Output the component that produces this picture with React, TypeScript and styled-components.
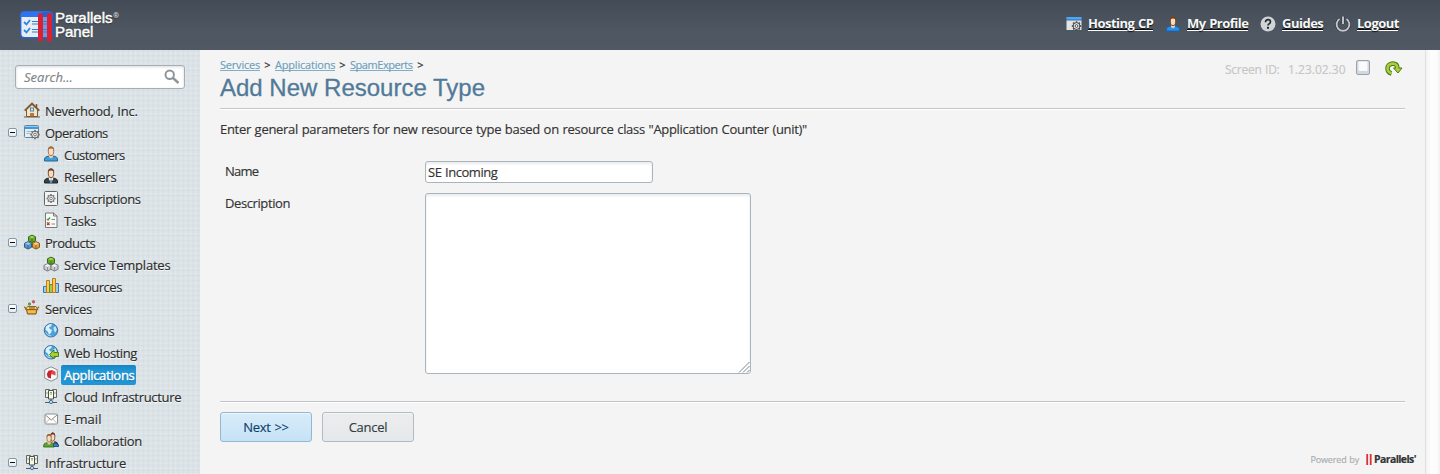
import React from 'react';
import styled, { createGlobalStyle } from 'styled-components';

const Global = createGlobalStyle`
  * { box-sizing: border-box; }
  body {
    margin: 0;
    font-family: 'Trebuchet MS', 'Open Sans', 'Noto Sans', sans-serif;
    font-size: 13px;
    word-spacing: 0.6px;
    color: #333;
    -webkit-text-stroke: 0.15px;
    background: #f4f4f4;
    overflow: hidden;
  }
`;

const Page = styled.div`
  display: flex;
  flex-direction: column;
  width: 1440px;
  height: 474px;
  overflow: hidden;
`;

const Header = styled.header`
  display: flex;
  justify-content: space-between;
  height: 50px;
  flex: none;
  padding: 10px 42px 0 20px;
  background: linear-gradient(#434c56, #4e5761 60%, #505963);
`;

const Brand = styled.div`
  display: flex;
  gap: 1px;
`;

const BrandName = styled.div`
  font: 15px/14px 'Liberation Sans', sans-serif;
  color: #fff;
  text-shadow: 0 1px 1px #222;
  -webkit-text-stroke: 0.45px #fff;
  padding-top: 1px;
  sup {
    margin-left: 1px;
    font-size: 7px;
    line-height: 0;
    vertical-align: 5px;
    color: #c0c5c9;
    -webkit-text-stroke: 0.2px #c0c5c9;
  }
`;

const Nav = styled.nav`
  display: flex;
  height: 27px;
  align-items: center;
`;

const NavItem = styled.div<{ $gap: number }>`
  display: flex;
  align-items: center;
  gap: 6px;
  margin-left: ${p => p.$gap}px;
`;

const NavLink = styled.a<{ $w: number; $ls: number }>`
  width: ${p => p.$w}px;
  height: 15px;
  line-height: 14px;
  white-space: nowrap;
  font-weight: 700;
  -webkit-text-stroke: 0;
  letter-spacing: ${p => p.$ls}px;
  color: #f6f7f8;
  text-shadow: 0 1px 1px #111;
  border-bottom: 1px solid #fff;
  box-shadow: 0 -1px 0 #111 inset;
`;

const Body = styled.div`
  display: flex;
  flex: 1;
  min-height: 0;
`;

const Sidebar = styled.aside`
  width: 200px;
  flex: none;
  padding: 15px 0 0;
  overflow: hidden;
  background:
    repeating-linear-gradient(90deg, rgba(255, 255, 255, 0.1) 0 1px, transparent 1px 3px, rgba(150, 170, 180, 0.06) 3px 4px, transparent 4px 5px),
    repeating-linear-gradient(0deg, rgba(255, 255, 255, 0.1) 0 1px, transparent 1px 3px, rgba(150, 170, 180, 0.06) 3px 4px, transparent 4px 5px),
    #dce3e7;
`;

const SearchBox = styled.div`
  display: flex;
  align-items: center;
  justify-content: space-between;
  width: 170px;
  height: 24px;
  margin: 0 0 11px 15px;
  padding: 0 4px 0 8px;
  border: 1px solid #a2aeb8;
  border-radius: 3px;
  background: #fff;
  box-shadow: inset 0 1px 3px rgba(0, 0, 0, 0.15);
  font-style: italic;
  color: #808488;
`;

const Row = styled.div<{ $child?: boolean }>`
  display: flex;
  align-items: center;
  height: 22px;
  padding-left: ${p => (p.$child ? 43 : 8)}px;
`;

const Toggle = styled.span<{ $hidden?: boolean }>`
  display: flex;
  align-items: center;
  justify-content: center;
  width: 9px;
  height: 9px;
  margin: 0 7px 2px 0;
  border: 1px solid #7d99ad;
  border-radius: 2px;
  background: linear-gradient(#fff, #e6eaec);
  visibility: ${p => (p.$hidden ? 'hidden' : 'visible')};
  &::after {
    content: '';
    width: 5px;
    height: 1px;
    background: #111;
  }
`;

const IconSlot = styled.span`
  display: flex;
  width: 16px;
  height: 16px;
  margin-bottom: 2px;
`;

const Label = styled.span<{ $ls: number; $active?: boolean }>`
  height: 20px;
  line-height: 20px;
  margin-left: 2px;
  padding: 0 2px 0 3px;
  white-space: nowrap;
  letter-spacing: ${p => p.$ls}px;
  border-radius: 2px;
  color: ${p => (p.$active ? '#fff' : '#2c2c2c')};
  background: ${p => (p.$active ? 'linear-gradient(#1784c4, #1f96d6 30%)' : 'none')};
  -webkit-text-stroke: ${p => (p.$active ? '0.4px #fff' : '0.15px')};
  text-shadow: ${p => (p.$active ? '0 1px 1px #0d5c8c' : '0 1px 0 #f4f7f8')};
`;

const Content = styled.main`
  display: flex;
  flex-direction: column;
  width: 1225px;
  padding: 8px 20px 0;
  background: #f4f4f4;
`;

const Gutter = styled.div`
  width: 15px;
  border-left: 1px solid #e0e0e0;
  background: linear-gradient(90deg, #f3f3f3, #fdfdfd 5px, #fbfbfb 12px, #ececec 13px, #fafafa);
`;

const TopLine = styled.div`
  display: flex;
  justify-content: space-between;
  height: 51px;
  border-bottom: 1px solid #c6c6c6;
  box-shadow: 0 1px 0 #fff;
`;

const Crumbs = styled.div`
  display: flex;
  height: 14px;
  font-size: 11px;
  line-height: 13px;
  span {
    width: 15px;
    text-align: center;
    color: #333;
  }
`;

const Crumb = styled.a<{ $w: number; $ls: number }>`
  width: ${p => p.$w}px;
  height: 13px;
  white-space: nowrap;
  color: #6a9fbd;
  border-bottom: 1px solid #7fafc8;
  letter-spacing: ${p => p.$ls}px;
`;

const Title = styled.h1`
  margin: 0;
  font: 24px/32px 'Liberation Sans', sans-serif;
  word-spacing: 0;
  color: #517a99;
  -webkit-text-stroke: 0.3px #517a99;
`;

const ScreenInfo = styled.div`
  display: flex;
  height: 20px;
  align-items: center;
  color: #c6c6c6;
  font-size: 12px;
  white-space: nowrap;
`;

const ScreenText = styled.span<{ $w: number; $ls?: number }>`
  width: ${p => p.$w}px;
  padding-top: 2px;
  letter-spacing: ${p => p.$ls ?? 0}px;
`;

const Intro = styled.p<{ $ls: number }>`
  margin: 11px 0 23px;
  line-height: 18px;
  white-space: nowrap;
  letter-spacing: ${p => p.$ls}px;
`;

const Field = styled.div`
  display: flex;
  margin-bottom: 10px;
  padding-left: 5px;
`;

const FieldLabel = styled.label<{ $ls: number }>`
  width: 200px;
  line-height: 20px;
  letter-spacing: ${p => p.$ls}px;
`;

const Input = styled.div<{ $w: number; $h: number }>`
  display: flex;
  justify-content: space-between;
  width: ${p => p.$w}px;
  height: ${p => p.$h}px;
  padding: 0 0 0 2px;
  line-height: 21px;
  letter-spacing: -0.45px;
  border: 1px solid #a9b5be;
  border-radius: 3px;
  background: #fff;
  box-shadow: inset 0 2px 3px rgba(0, 0, 0, 0.08);
`;

const Grip = styled.svg`
  align-self: flex-end;
  margin-left: auto;
`;

const Actions = styled.div`
  display: flex;
  gap: 10px;
  margin-top: 17px;
  padding-top: 10px;
  border-top: 1px solid #c0c4c6;
  box-shadow: inset 0 1px 0 #fff;
`;

const Button = styled.div<{ $primary?: boolean }>`
  width: 92px;
  height: 30px;
  border: 1px solid ${p => (p.$primary ? '#93b9d0' : '#b0bcc3')};
  border-radius: 3px;
  background: ${p => (p.$primary ? 'linear-gradient(#d8ecf9, #c6e2f7)' : 'linear-gradient(#ececed, #e5e9eb)')};
  box-shadow: inset 0 1px 0 rgba(255, 255, 255, 0.6);
  color: ${p => (p.$primary ? '#0d3f6b' : '#333d44')};
  line-height: 29px;
  text-align: center;
  letter-spacing: -0.25px;
`;

const Footer = styled.footer`
  display: flex;
  justify-content: flex-end;
  align-items: center;
  gap: 7px;
  height: 14px;
  margin: 10px -12px 0 0;
  font-size: 9px;
  letter-spacing: -0.15px;
  color: #a9acae;
`;

const FooterBrand = styled.span`
  display: flex;
  align-items: center;
  gap: 2px;
  width: 51px;
  white-space: nowrap;
  font: 700 10.5px/12px 'Open Sans', sans-serif;
  letter-spacing: -0.6px;
  color: #333;
`;

const Svg = ({ children, w = 16, h = 16 }: { children: React.ReactNode; w?: number; h?: number }) => (
  <svg width={w} height={h} viewBox={`0 0 ${w} ${h}`} fill="none">{children}</svg>
);

const gearAngles = Array.from({ length: 8 }, (_, i) => i * 45);
const Gear = ({ x, y, r = 3.4, c = '#666', f = '#e6e8ea' }: { x: number; y: number; r?: number; c?: string; f?: string }) => (
  <g transform={`translate(${x} ${y})`}>
    {gearAngles.map(a => <rect key={a} x="-.8" y={-r - 1.3} width="1.6" height="2" fill={c} transform={`rotate(${a})`} />)}
    <circle r={r} fill={f} stroke={c} />
    <circle r={r * 0.4} fill="#fff" stroke={c} strokeWidth=".9" />
  </g>
);

const Person = ({ hair, body, edge, tie }: { hair: string; body: string; edge: string; tie?: boolean }) => (
  <g>
    <path d="M1.500 15v-2q0-2.200 3.500-2.800h6q3.500.6 3.500 2.800v2z" fill={body} stroke={edge} />
    <path d="M6 8.500h4v2.500L8 12.500 6 11z" fill="#f2cfab" />
    {tie && <path d="M5.500 10.200L8 15l2.500-4.800L8 11z" fill="#fff" />}
    {tie && <path d="M7.300 11.500h1.400l.5 3H6.800z" fill="#579bd0" />}
    <ellipse cx="8" cy="5.200" rx="2.700" ry="4.400" fill="#f6dcc0" stroke={hair} strokeWidth=".9" />
    <path d="M4.900 4.800V3.200Q5.200.5 8 .5t3.100 2.700v1.600l-.8-1.800q-2.300-1-4.600 0z" fill={hair} />
  </g>
);

const Cube = ({ x, y, c, e, t }: { x: number; y: number; c: string; e: string; t: string }) => (
  <g transform={`translate(${x} ${y})`} strokeLinejoin="round">
    <path d="M.5 2.300L4 .6l3.500 1.700v4L4 8 .5 6.300z" fill={c} stroke={e} />
    <path d="M1.300 2.600L4 1.300l2.700 1.300L4 4z" fill={t} />
    <path d="M4 4v3.600" stroke={e} strokeWidth=".8" />
  </g>
);

const Globe = () => (
  <g>
    <circle cx="8" cy="8.300" r="6.700" fill="#4aa3dc" stroke="#3c6f98" />
    <path d="M3 4.500q3-3.200 6-2.300l-1 2-2 1 1 2 2 .5-1 3-2 2-1-3-2.500-2z" fill="#dff1fb" />
    <path d="M10.500 5.500l2-1.300 1.200 3-1 3.300-1.700-1.500z" fill="#c8e6f7" />
    <path d="M2.500 10.500q2 3.800 6 3.500" stroke="#a5d9f5" />
  </g>
);

const Servers = () => (
  <g>
    <path d="M2.500 1.500h4v8h-4zM9.500 1.500h4v8h-4z" fill="#eef0e8" stroke="#666" />
    <path d="M5.500 2.500h5V11h-5z" fill="#f7f8ee" stroke="#4c504c" />
    <path d="M7 4.500h2M7 6h2" stroke="#8cac4a" />
    <path d="M4 4v2M12 4v2" stroke="#9aa388" />
    <path d="M8 11v2" stroke="#555" />
    <path d="M2 14.500h4M10 14.500h4" stroke="#556" strokeWidth="1.200" />
    <circle cx="8" cy="14" r="1.700" fill="#a9d4ee" stroke="#3d6c8c" strokeWidth=".9" />
  </g>
);

const icons: Record<string, React.ReactNode> = {
  home: <>
    <path d="M2.500 7.500L8 2.300l5.500 5.200v7h-11z" fill="#f4e6c0" stroke="#7c5b3c" />
    <path d="M.7 8.600L8 1.600l7.300 7" stroke="#805638" strokeWidth="1.900" />
    <rect x="6.500" y="6" width="3" height="3" fill="#d3ecf8" stroke="#4d82a3" />
    <path d="M6 11h4v3.500H6z" fill="#b07a4c" /><path d="M0 15h16" stroke="#76543a" />
    <path d="M12.500 2v3.500" stroke="#805638" strokeWidth="1.500" />
  </>,
  operations: <>
    <rect x=".5" y="1.500" width="14" height="12" rx="1" fill="#e4eef4" stroke="#66859a" />
    <path d="M1 2h13v3H1z" fill="#3d9bdc" /><path d="M1 2.500h13" stroke="#8dcbf3" />
    <path d="M2.500 7.500h5M2.500 9.500h4" stroke="#9eb8c8" />
    <Gear x={11} y={10.600} />
  </>,
  customers: <Person hair="#a66a3b" body="#3d9ddd" edge="#28668f" />,
  resellers: <Person hair="#6e422a" body="#3d4043" edge="#222" tie />,
  subscriptions: <><rect x="1.500" y="1.500" width="13" height="14" rx="1" fill="#f3f4f5" stroke="#666" /><Gear x={8} y={8.500} r={3.200} c="#777" /></>,
  tasks: <>
    <path d="M2.500 1h8l3.500 3v11.500H2.500z" fill="#f7f8f8" stroke="#777" /><path d="M10.500 1v3H14" stroke="#777" />
    <path d="M4 7l1 1 2-2.500" stroke="#4a9a2c" strokeWidth="1.300" /><path d="M4 10.500l2.500 2.500M6.500 10.500L4 13" stroke="#bc3d30" strokeWidth="1.200" />
    <path d="M8.500 7.500H12M8.500 12H12" stroke="#888" />
  </>,
  products: <><Cube x={0} y={7} c="#5b97c9" e="#315c83" t="#9cc9ea" /><Cube x={8} y={7} c="#dda24a" e="#855714" t="#f4cf8b" /><Cube x={4} y={0.5} c="#69a928" e="#38651a" t="#a3d552" /></>,
  templates: <><Cube x={0.5} y={7} c="#c9cdcf" e="#7c8083" t="#f0f2f3" /><Cube x={7.5} y={7} c="#c9cdcf" e="#7c8083" t="#f0f2f3" /><Cube x={4} y={0.5} c="#69a928" e="#38651a" t="#a3d552" /></>,
  resources: <g>
    <path d="M.5 8.500h3v6h-3z" fill="#9ccbee" stroke="#3e77a3" /><path d="M12.500 5.500h3v9h-3z" fill="#9ccbee" stroke="#3e77a3" />
    <path d="M3.500 2.500h3v12h-3z" fill="#ffc957" stroke="#b67f1b" /><path d="M6.500 6.500h3v8h-3z" fill="#9bcf53" stroke="#688a27" />
    <path d="M9.500.5h3v14h-3z" fill="#ffc957" stroke="#b67f1b" />
  </g>,
  services: <>
    <circle cx="5.500" cy="4" r="1.200" fill="#68a84e" stroke="#39732b" strokeWidth=".6" /><circle cx="9.500" cy="1.800" r="1.300" fill="#d3525c" stroke="#913540" strokeWidth=".5" />
    <path d="M2.500 9.500h10.500l-1 4.500h-8.500z" fill="#e6aa3c" stroke="#7d5315" />
    <path d="M3.500 6.500h8.500l2 3h-12.500z" fill="#f8d680" stroke="#976519" /><path d="M5 8h6" stroke="#755019" />
    <path d="M.3 6.800l2.200 2.500M15 6.800l-2.200 2.500" stroke="#a26e1d" strokeWidth="1.300" /><path d="M4 12h7.500" stroke="#f7d06c" />
  </>,
  domains: <Globe />,
  hosting: <><Globe /><path d="M6.500 10.500L11 6v2.500h4.500v4H11V15z" fill="#a5d035" stroke="#547d15" /></>,
  applications: <>
    <path d="M8 .8l6.300 3v8.400L8 15.200l-6.300-3V3.800z" fill="#f7f8f8" stroke="#8a8f93" />
    <path d="M9.500 4L5.500 4.700 3.800 8l1 3.500L8 12.500V9.700z" fill="#c9242c" /><path d="M9 4l3.500 1.700v3.800L8.300 8z" fill="#e2474a" />
  </>,
  servers: <Servers />,
  email: <>
    <rect x="2" y="4" width="12.500" height="10" rx="1" fill="#fdfdfb" stroke="#8b8e8f" />
    <path d="M2.500 5l5.700 5L14 5" stroke="#8d857b" /><path d="M2.500 13.500L6.500 9M14 13.500L10 9" stroke="#c5bfb6" />
  </>,
  collaboration: <>
    <g transform="translate(3.500 0) scale(.78 .95)"><Person hair="#6b3824" body="#3d4043" edge="#222" /></g>
    <g transform="translate(-.5 1.500) scale(.82 .9)"><Person hair="#996335" body="#5ba52e" edge="#38691b" /></g>
    <path d="M10.500 14.500h5v-1.700l-3-1.500h-2z" fill="#3484c4" stroke="#24557f" />
  </>,
};

type Entry = { t: string; i: string; ls: number; child?: boolean; active?: boolean; leaf?: boolean };
const tree: Entry[] = [
  { t: 'Neverhood, Inc.', i: 'home', ls: -0.25, leaf: true },
  { t: 'Operations', i: 'operations', ls: -0.5 },
  { t: 'Customers', i: 'customers', ls: -0.55, child: true },
  { t: 'Resellers', i: 'resellers', ls: -0.2, child: true },
  { t: 'Subscriptions', i: 'subscriptions', ls: -0.42, child: true },
  { t: 'Tasks', i: 'tasks', ls: -0.3, child: true },
  { t: 'Products', i: 'products', ls: -0.48, },
  { t: 'Service Templates', i: 'templates', ls: -0.22, child: true },
  { t: 'Resources', i: 'resources', ls: -0.5, child: true },
  { t: 'Services', i: 'services', ls: -0.3 },
  { t: 'Domains', i: 'domains', ls: -0.55, child: true },
  { t: 'Web Hosting', i: 'hosting', ls: -0.45, child: true },
  { t: 'Applications', i: 'applications', ls: -0.3, child: true, active: true },
  { t: 'Cloud Infrastructure', i: 'servers', ls: -0.3, child: true },
  { t: 'E-mail', i: 'email', ls: 0.05, child: true },
  { t: 'Collaboration', i: 'collaboration', ls: -0.3, child: true },
  { t: 'Infrastructure', i: 'servers', ls: -0.22 },
];

export default function App() {
  return (
    <Page>
      <Global />
      <Header>
        <Brand>
          <Svg w={34} h={32}>
            <rect x=".7" y="1.700" width="32" height="26" rx="4" fill="#e9edf2" stroke="#2463d5" strokeWidth="1.400" />
            <path d="M.5 7V5.500q0-4 4-4h24q4 0 4 4V7z" fill="#2f74ee" />
            <path d="M22 2h6.500q4 0 4 4v17q0 4-4 4H22z" fill="#1e50c4" opacity=".55" />
            <path d="M4 12l2.500 2.500L10 10M4 20l2.500 2.500L10 18" stroke="#2c86e4" strokeWidth="1.800" />
            <path d="M12 11.500h15M12 14h15M12 19.500h15M12 22h15" stroke="#2c7de0" />
            <path d="M20.500 5.500V29M29.500 5.500V29" stroke="#da2032" strokeWidth="5" strokeLinecap="round" />
          </Svg>
          <BrandName>Parallels<sup>®</sup><br />Panel</BrandName>
        </Brand>
        <Nav>
          <NavItem $gap={0}>
            <Svg><path d="M.5 1h15v3.500H.5z" fill="#2f8de8" /><path d="M.5 4.500h15V14H.5z" fill="#e2e4e6" /><path d="M.5 2h15" stroke="#7bbcf7" /><Gear x={10.5} y={10} c="#444" /></Svg>
            <NavLink $w={65} $ls={-0.5}>Hosting CP</NavLink>
          </NavItem>
          <NavItem $gap={12}>
            <Svg><Person hair="#70401f" body="#2492f0" edge="#1564b5" /></Svg>
            <NavLink $w={61} $ls={-0.5}>My Profile</NavLink>
          </NavItem>
          <NavItem $gap={12}>
            <Svg><circle cx="8" cy="8" r="7.500" fill="#d0d4d7" /><path d="M5.500 6.200q0-2.500 2.500-2.500t2.500 2.100q0 1.200-1.300 1.900Q8 8.400 8 9.600" stroke="#272c31" strokeWidth="1.700" /><rect x="7" y="10.800" width="2" height="2" fill="#272c31" /></Svg>
            <NavLink $w={41} $ls={-0.5}>Guides</NavLink>
          </NavItem>
          <NavItem $gap={12}>
            <Svg><path d="M4.500 3A6.400 6.400 0 1 0 11.500 3M8 .5V8" stroke="#30363c" strokeWidth="3" /><path d="M4.500 3A6.400 6.400 0 1 0 11.500 3M8 .5V8" stroke="#c4c9cd" strokeWidth="1.900" /></Svg>
            <NavLink $w={41} $ls={-0.5}>Logout</NavLink>
          </NavItem>
        </Nav>
      </Header>
      <Body>
        <Sidebar>
          <SearchBox>
            Search...
            <Svg><circle cx="5.700" cy="5.700" r="4.200" stroke="#8d959c" strokeWidth="2" /><path d="M9 9l5.500 5" stroke="#8d959c" strokeWidth="2.400" /></Svg>
          </SearchBox>
          {tree.map(e => (
            <Row key={e.t} $child={e.child}>
              {!e.child && <Toggle $hidden={e.leaf} />}
              <IconSlot><Svg>{icons[e.i]}</Svg></IconSlot>
              <Label $ls={e.ls} $active={e.active}>{e.t}</Label>
            </Row>
          ))}
        </Sidebar>
        <Content>
          <TopLine>
            <div>
              <Crumbs>
                <Crumb $w={40} $ls={-0.2}>Services</Crumb><span>&gt;</span>
                <Crumb $w={60} $ls={-0.2}>Applications</Crumb><span>&gt;</span>
                <Crumb $w={63} $ls={-0.45}>SpamExperts</Crumb><span>&gt;</span>
              </Crumbs>
              <Title>Add New Resource Type</Title>
            </div>
            <ScreenInfo>
              <ScreenText $w={63} $ls={-0.25}>Screen ID:</ScreenText>
              <ScreenText $w={67}>1.23.02.30</ScreenText>
              <Svg w={30}><rect x="1.500" y=".5" width="13" height="14" rx="1.500" fill="#d3d8df" stroke="#9aa2ad" /><rect x="3.500" y="1.500" width="9" height="9.500" rx="1" fill="#f8fafc" /></Svg>
              <Svg w={20}><path d="M6.500 13.500q-4-1-4-5t5-5q5 0 5 5" stroke="#50771c" strokeWidth="4.500" /><path d="M8.500 8h8.500l-4 5z" fill="#a8d13a" stroke="#50771c" /><path d="M6.500 13.300q-4-1-4-5t5-4.800q5 0 5 5.500" stroke="#a8d13a" strokeWidth="2.500" /></Svg>
            </ScreenInfo>
          </TopLine>
          <Intro $ls={-0.3}>Enter general parameters for new resource type based on resource class "Application Counter (unit)"</Intro>
          <Field>
            <FieldLabel $ls={-0.8}>Name</FieldLabel>
            <Input $w={228} $h={22}>SE Incoming</Input>
          </Field>
          <Field>
            <FieldLabel $ls={-0.4}>Description</FieldLabel>
            <Input $w={326} $h={181}>
              <Grip width="12" height="12" viewBox="0 0 12 12"><path d="M1 11.500L11.500 1M5 11.500L11.500 5M9 11.500L11.500 9" stroke="#777" strokeWidth=".9" /></Grip>
            </Input>
          </Field>
          <Actions>
            <Button $primary>Next &gt;&gt;</Button>
            <Button>Cancel</Button>
          </Actions>
          <Footer>
            Powered by
            <FooterBrand>
              <Svg w={6} h={11}><path d="M1.200 0v11M4.700 0v11" stroke="#d8323c" strokeWidth="1.800" /></Svg>
              Parallels'
            </FooterBrand>
          </Footer>
        </Content>
        <Gutter />
      </Body>
    </Page>
  );
}
